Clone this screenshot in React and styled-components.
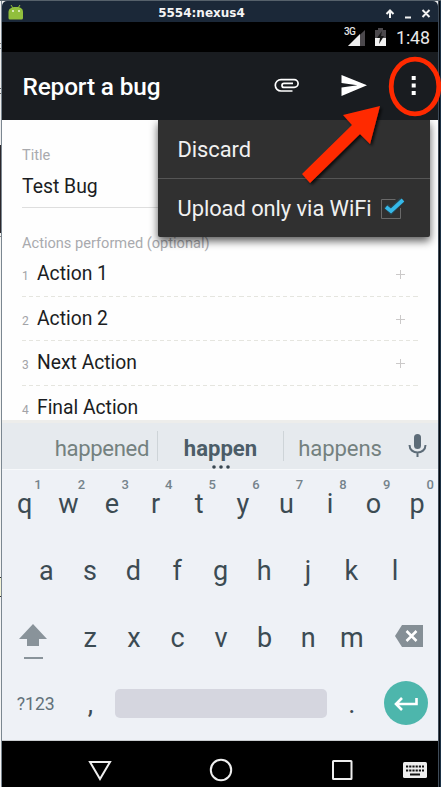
import React from "react";
import styled, { createGlobalStyle } from "styled-components";

const Global = createGlobalStyle`
  * { box-sizing: border-box; }
  body { margin: 0; font-family: Roboto, "Liberation Sans", sans-serif; overflow: hidden; }
  svg { display: block; flex: none; }
`;

const Desktop = styled.div`
  position: relative;
  width: 441px;
  height: 787px;
  padding: 1px 3px 0 2px;
  overflow: hidden;
  background: linear-gradient(#56616b 0 1px, transparent 1px),
    linear-gradient(90deg, transparent 1px, #7b8791 1px 2px, transparent 2px 438px, #3f4b58 438px 439px, #050a10 439px 440px, #1b3145 440px),
    linear-gradient(#f0f0f0 0 43px, #888 43px 44px, #eee 44px 48px, #888 48px 49px, #eee 49px 88px, #666 88px 89px, #eee 89px 93px, #666 93px 94px, #eee 94px 145px, #2b272b 145px 233px, #f4f4f2 233px 236px, #888 236px 237px, #f4f4f2 237px 577px, #333 577px 578px, #f3f3d5 578px 596px, #333 596px 597px, #f4f4f4 597px);
`;
const Window = styled.div`
  display: flex;
  flex-direction: column;
  height: 786px;
  background: #fefefe;
  border-radius: 5px 5px 0 0;
  overflow: hidden;
`;
const TitleBar = styled.header`
  display: grid;
  grid-template-columns: 60px 1fr 60px;
  align-items: center;
  height: 21px;
  flex: none;
  background: #1b2838;
  color: #f4f4f4;
  font: bold 12px/21px "DejaVu Sans", sans-serif;
  padding: 0 7px 0 5px;
`;
const WindowName = styled.div`
  text-align: center;
  padding: 2px 35px 0 0;
`;
const Controls = styled.div`
  display: flex;
  justify-content: flex-end;
  padding-top: 2px;
`;
const StatusBar = styled.div`
  display: flex;
  align-items: center;
  justify-content: flex-end;
  height: 30px;
  flex: none;
  padding-right: 8px;
  background: #000;
  color: #e8e8e8;
`;
const Clock = styled.span`
  width: 34px;
  font-size: 17.8px;
  letter-spacing: -0.1px;
  line-height: 30px;
  padding-top: 1px;
`;
const SignalIcons = styled.svg`
  margin-right: -2px;
`;
const AppBar = styled.div`
  display: flex;
  align-items: center;
  height: 68px;
  flex: none;
  padding: 0 20px;
  background: #191c20;
  color: #fff;
`;
const AppTitle = styled.h1`
  flex: 1;
  margin: 0;
  padding-left: 0.5px;
  font-size: 24.4px;
  font-weight: 500;
  letter-spacing: -0.15px;
`;
const Form = styled.main`
  height: 300px;
  flex: none;
  padding: 26px 18px 0 20px;
  overflow: hidden;
`;
const Label = styled.div`
  height: 19px;
  font-size: 14.6px;
  line-height: 19px;
  color: #a9aaae;
`;
const TitleField = styled.div`
  height: 43px;
  margin-bottom: 26px;
  border-bottom: 1px solid #dedede;
  padding-top: 8px;
  font-size: 19.4px;
  line-height: 27px;
  color: #1b1d22;
`;
const ActionRow = styled.div`
  display: grid;
  grid-template-columns: 15px 1fr 25px;
  align-items: baseline;
  height: ${(p) => p.$height}px;
  padding-top: ${(p) => p.$top}px;
  background: repeating-linear-gradient(90deg, #e5e5df 0 4px, transparent 4px 7.25px) bottom / 100% 1px no-repeat;
  font-size: 19.3px;
  line-height: 24px;
  color: #1b1d22;
`;
const RowNumber = styled.span`
  font-size: 12px;
  color: #a2a3a7;
`;
const PlusIcon = styled.svg`
  align-self: start;
  margin-top: 7px;
`;
const Suggestions = styled.div`
  display: grid;
  grid-template-columns: 156px 126px 114px 40px;
  align-items: center;
  height: 50px;
  flex: none;
  border-top: 3px solid #ededeb;
  border-bottom: 1px solid #f7f9fb;
  background: #e6eaee;
`;
const Suggestion = styled.div`
  position: relative;
  height: 30px;
  border-right: ${(p) => (p.$last ? "0" : "1px solid #ced4d8")};
  font-size: 22.1px;
  line-height: 34px;
  letter-spacing: ${(p) => p.$spacing || 0}px;
  font-weight: ${(p) => (p.$active ? 700 : 400)};
  color: ${(p) => (p.$active ? "#4c5d68" : "#74817f")};
  text-align: ${(p) => (p.$align || "center")};
  padding-right: ${(p) => p.$end || 0}px;
`;
const MoreDots = styled.svg`
  position: absolute;
  left: 54px;
  bottom: -8px;
`;
const MicIcon = styled.svg`
  margin-left: 8px;
`;
const Keyboard = styled.div`
  display: flex;
  flex-direction: column;
  height: 271px;
  flex: none;
  padding-left: 1px;
  background: #eef1f6;
  color: #3c4b53;
  border-bottom: 1px solid #c9cccf;
`;
const KeyRow = styled.div`
  display: flex;
  align-items: center;
  height: ${(p) => p.$height}px;
  padding: 0 ${(p) => p.$inset || 0}px;
`;
const Key = styled.div`
  position: relative;
  width: 43.6px;
  flex: none;
  text-align: center;
  font-size: 27px;
  line-height: 34px;
`;
const Hint = styled.sup`
  position: absolute;
  right: 5px;
  top: -11px;
  font-size: 13px;
  line-height: 18px;
  font-weight: 500;
  color: #75838b;
`;
const WideKey = styled.div`
  display: flex;
  justify-content: center;
  width: 65.5px;
  flex: none;
  font-size: 17.6px;
  color: #62717a;
`;
const ShiftIcon = styled.svg`
  margin: 11px 5px 0 0;
`;
const DeleteIcon = styled.svg`
  margin: 0 0 3px 5px;
`;
const SpaceKey = styled.div`
  width: 212px;
  height: 29px;
  flex: none;
  margin: 0 3px;
  border-radius: 5px;
  background: #d5d6df;
`;
const EnterKey = styled.div`
  display: grid;
  place-items: center;
  width: 44px;
  height: 44px;
  margin-bottom: 1px;
  border-radius: 50%;
  background: #4db6ac;
`;
const NavBar = styled.nav`
  display: flex;
  align-items: center;
  height: 46px;
  flex: none;
  padding: 12px 0 0 86px;
  background: #000;
`;
const Menu = styled.div`
  position: absolute;
  left: 158px;
  top: 120px;
  width: 272px;
  height: 117px;
  border-radius: 0 0 2px 2px;
  background: #303030;
  box-shadow: 0 4px 9px rgba(0, 0, 0, 0.65);
  clip-path: inset(0 -20px -20px -20px);
  color: #f1f1f1;
`;
const MenuItem = styled.div`
  display: flex;
  align-items: center;
  height: ${(p) => (p.$first ? 59 : 58)}px;
  padding: 1px 0 0 19.5px;
  border-bottom: ${(p) => (p.$first ? "1px solid #555" : "0")};
  font-size: 21.9px;
  letter-spacing: -0.05px;
`;
const CheckIcon = styled.svg`
  margin: 0 0 2px 7px;
`;
const Callout = styled.svg`
  position: absolute;
  left: 290px;
  top: 50px;
`;

const actions = [
  { name: "Action 1", height: 44, top: 9, addable: true },
  { name: "Action 2", height: 44, top: 10, addable: true },
  { name: "Next Action", height: 45, top: 10, addable: true },
  { name: "Final Action", height: 45, top: 10, addable: false },
];

function App() {
  return (
    <Desktop>
      <Global />
      <Window>
        <TitleBar>
          <svg width="18" height="18" viewBox="0 0 18 18">
            <path d="M1.5 14V8c0-3 2.5-5 7.500-5S16 5 16 8v6q0 1.500-1.500 1.500H3Q1.500 15.500 1.500 14Z" fill="#91bf3d" />
            <path d="M4 1l2 3M13 1l-2 3" stroke="#91bf3d" />
            <circle cx="6" cy="7" r="1" fill="#eff8dd" /><circle cx="12" cy="7" r="1" fill="#eff8dd" />
          </svg>
          <WindowName>5554:nexus4</WindowName>
          <Controls>
            <svg width="46" height="12" viewBox="0 0 46 12" fill="none" stroke="#f3f3f3" strokeWidth="2">
              <path d="M5 10V3M1.5 6 5 2.5 8.5 6M20 9.5h6M37.5 2l7 7M44.5 2l-7 7" />
            </svg>
          </Controls>
        </TitleBar>
        <StatusBar>
          <SignalIcons width="54" height="26" viewBox="0 0 54 26">
            <text x="0" y="11" fontSize="10" fontWeight="500" letterSpacing="-0.8" fill="#e4e4e4">3G</text>
            <path d="M21 6v16H4Z" fill="#4b484c" /><path d="M16 10v12H4Z" fill="#eee" />
            <path d="M31 6h3V4h5v2h3v16H31Z" fill="#4b484c" /><path d="M31 14h11v8H31Z" fill="#f2f2f2" />
            <path d="M38 7l-5 7h3l-1 6 5-8h-3Z" fill="#161616" />
          </SignalIcons>
          <Clock>1:48</Clock>
        </StatusBar>
        <AppBar>
          <AppTitle>Report a bug</AppTitle>
          <svg width="146" height="30" viewBox="272 72 146 30">
            <path d="M292.500 92H281a5.700 5.700 0 0 1 0-11.400h13.200a3.900 3.900 0 0 1 0 7.800H284a2 2 0 0 1 0-4h9" fill="none" stroke="#fff" strokeWidth="1.7" />
            <path d="M341.500 76 367 86.200 341.500 97V88.500l16-2.300-16-2.200Z" fill="#fff" />
            <path d="M411.700 77h4v4h-4zM411.700 84.500h4v4h-4zM411.700 92h4v4h-4z" fill="#fff" />
          </svg>
        </AppBar>
        <Form>
          <Label>Title</Label>
          <TitleField>Test Bug</TitleField>
          <Label>Actions performed (optional)</Label>
          {actions.map(({ name, height, top, addable }, index) => (
            <ActionRow key={name} $height={height} $top={top}>
              <RowNumber>{index + 1}</RowNumber>
              <span>{name}</span>
              {addable && (
                <PlusIcon width="11" height="11" viewBox="0 0 11 11">
                  <path d="M5.5 1v9M1 5.5h9" stroke="#cbc9c9" />
                </PlusIcon>
              )}
            </ActionRow>
          ))}
        </Form>
        <Suggestions>
          <Suggestion $align="right" $end={8} $spacing={-0.35}>happened</Suggestion>
          <Suggestion $active>happen
            <MoreDots width="20" height="4" viewBox="0 0 20 4" fill="#384750">
              <circle cx="2" cy="2" r="1.8" /><circle cx="9" cy="2" r="1.8" /><circle cx="16" cy="2" r="1.8" />
            </MoreDots>
          </Suggestion>
          <Suggestion $last $end={2} $spacing={-0.1}>happens</Suggestion>
          <MicIcon width="26" height="28" viewBox="0 0 26 28">
            <rect x="8" y="2" width="7" height="15" rx="3.5" fill="#5d6c78" />
            <path d="M3.5 13c0 10 16 10 16 0M11.5 20v5" stroke="#5d6c78" strokeWidth="2" fill="none" />
          </MicIcon>
        </Suggestions>
        <Keyboard>
          <KeyRow $height={67}>
            {[..."qwertyuiop"].map((letter, index) => (
              <Key key={letter}>{letter}<Hint>{(index + 1) % 10}</Hint></Key>
            ))}
          </KeyRow>
          <KeyRow $height={67} $inset={21.5}>
            {[..."asdfghjkl"].map((letter) => <Key key={letter}>{letter}</Key>)}
          </KeyRow>
          <KeyRow $height={67}>
            <WideKey>
              <ShiftIcon width="30" height="38" viewBox="0 0 30 38" fill="#89939a">
                <path d="M15 0 29 15h-8v7H9v-7H1ZM6 33h19v2H6z" />
              </ShiftIcon>
            </WideKey>
            {[..."zxcvbnm"].map((letter) => <Key key={letter}>{letter}</Key>)}
            <WideKey>
              <DeleteIcon width="28" height="22" viewBox="0 0 28 22">
                <path d="M7 0h21v22H7L0 11Z" fill="#858f96" />
                <path d="m11.5 6 10 10M21.5 6l-10 10" stroke="#fff" strokeWidth="2.5" />
              </DeleteIcon>
            </WideKey>
          </KeyRow>
          <KeyRow $height={65}>
            <WideKey>?123</WideKey>
            <Key>,</Key>
            <SpaceKey />
            <Key>.</Key>
            <WideKey>
              <EnterKey>
                <svg width="24" height="16" viewBox="0 0 24 16" fill="none" stroke="#fff" strokeWidth="2.6">
                  <path d="M22.5 3v6H3M8 3 2 9l6 6" />
                </svg>
              </EnterKey>
            </WideKey>
          </KeyRow>
        </Keyboard>
        <NavBar>
          <svg width="342" height="26" viewBox="88 757 342 26" fill="none" stroke="#eee" strokeWidth="2">
            <path d="M90 762h20l-10 17Z" />
            <circle cx="221" cy="770" r="10.2" />
            <rect x="333" y="761" width="18.5" height="18" rx=".5" />
            <rect x="403" y="762" width="24" height="16" rx="1.5" fill="#eee" stroke="none" />
            <path d="M406 766.5h18M406 770.5h18" stroke="#111" strokeDasharray="2.2 1" />
            <path d="M410 774.5h10" stroke="#111" />
          </svg>
        </NavBar>
      </Window>
      <Menu>
        <MenuItem $first>Discard</MenuItem>
        <MenuItem>
          <span>Upload only via WiFi</span>
          <CheckIcon width="28" height="28" viewBox="0 0 28 28">
            <path d="M21.5 14v10.5H2.5V5.5h14" fill="none" stroke="#696969" />
            <path d="m7 12 5 5L23 6" fill="none" stroke="#176a8c" strokeWidth="6" opacity=".35" />
            <path d="m7 13 5 4L24 6" fill="none" stroke="#35b8e8" strokeWidth="3.8" />
          </CheckIcon>
        </MenuItem>
      </Menu>
      <Callout width="151" height="138" viewBox="290 50 151 138">
        <defs><filter id="arrow-shadow"><feDropShadow dx="2" dy="2" stdDeviation="1.5" floodOpacity=".75" /></filter></defs>
        <path d="m302 174 50-49-9-10 37-9-10 38-10-10-50 49Z" fill="#ff2a00" filter="url(#arrow-shadow)" />
        <ellipse cx="415" cy="86.5" rx="23.8" ry="27.3" fill="none" stroke="#ff2a00" strokeWidth="4.8" />
      </Callout>
    </Desktop>
  );
}

export default App;
